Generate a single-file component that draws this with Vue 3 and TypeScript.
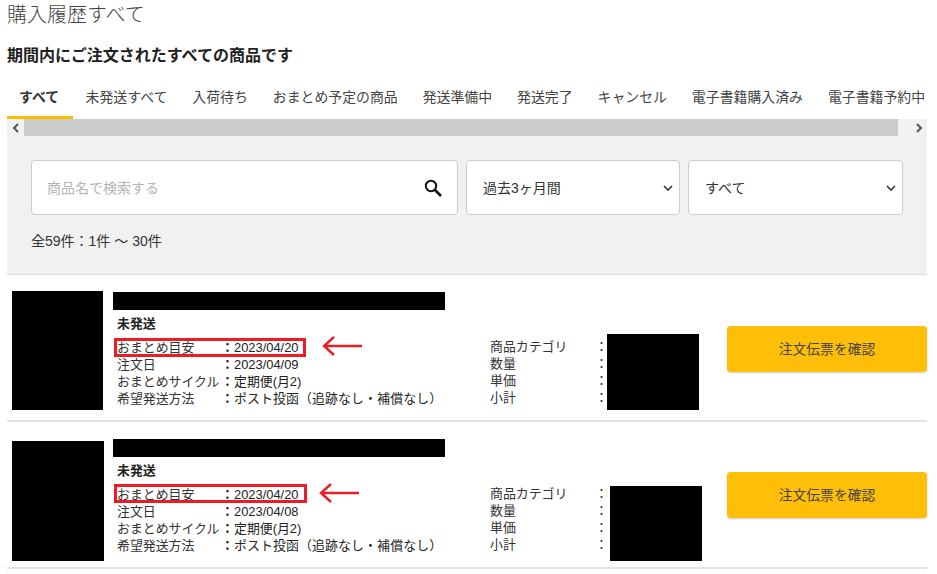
<script setup lang="ts">
interface Order {
  date: string
  thumbW: number
  thumbH: number
  thumbTop: number
  priceLeft: number
  priceTop: number
  priceH: number
  boxW: number
  boxTop: number
  arrowLeft: number
  btnTop: number
  tick: boolean
}

const tabs: string[] = ['すべて', '未発送すべて', '入荷待ち', 'おまとめ予定の商品', '発送準備中', '発送完了', 'キャンセル', '電子書籍購入済み', '電子書籍予約中']

const orders: Order[] = [
  { date: '2023/04/09', thumbW: 91, thumbH: 119, thumbTop: 16, priceLeft: 600, priceTop: 59, priceH: 76, boxW: 192, boxTop: 63, arrowLeft: 208, btnTop: 51, tick: false },
  { date: '2023/04/08', thumbW: 92, thumbH: 120, thumbTop: 19, priceLeft: 603, priceTop: 64, priceH: 75, boxW: 193, boxTop: 62, arrowLeft: 205, btnTop: 50, tick: true },
]
</script>

<template>
  <div class="page">
    <h1 class="title">購入履歴すべて</h1>
    <p class="lead">期間内にご注文されたすべての商品です</p>

    <nav class="tabs">
      <span v-for="(tab, i) in tabs" :key="tab" class="tab" :class="{ active: i === 0 }">{{ tab }}</span>
    </nav>

    <div class="scrollbar">
      <span class="scroll-btn">
        <svg width="8" height="10" viewBox="0 0 8 10"><path d="M6 1 2 5l4 4" fill="none" stroke="#555" stroke-width="2" /></svg>
      </span>
      <span class="scroll-thumb"></span>
      <span class="scroll-end">
        <svg width="8" height="10" viewBox="0 0 8 10"><path d="M2 1l4 4-4 4" fill="none" stroke="#555" stroke-width="2" /></svg>
      </span>
    </div>

    <section class="filters">
      <div class="controls">
        <div class="search">
          <span class="placeholder">商品名で検索する</span>
          <svg width="18" height="18" viewBox="0 0 18 18"><circle cx="7" cy="7" r="5.2" fill="none" stroke="#111" stroke-width="2" /><path d="M11 11l6 6" stroke="#111" stroke-width="2.6" /></svg>
        </div>
        <div class="select period">
          <span class="select-text">過去3ヶ月間</span>
          <svg width="10" height="6" viewBox="0 0 10 6"><path d="M1 1l4 4 4-4" fill="none" stroke="#333" stroke-width="1.6" /></svg>
        </div>
        <div class="select kind">
          <span class="select-text">すべて</span>
          <svg width="10" height="6" viewBox="0 0 10 6"><path d="M1 1l4 4 4-4" fill="none" stroke="#333" stroke-width="1.6" /></svg>
        </div>
      </div>
      <p class="count">全59件：1件 ～ 30件</p>
    </section>

    <article v-for="order in orders" :key="order.date" class="order">
      <div class="thumb-cell">
        <div class="thumb" :style="{ width: order.thumbW + 'px', height: order.thumbH + 'px', marginTop: order.thumbTop + 'px' }"></div>
      </div>
      <div class="main">
        <div class="redact-title"></div>
        <div class="status">未発送</div>
        <div class="rows">
          <div class="row">
            <span class="key">おまとめ目安</span><span class="colon">：</span><span class="val">2023/04/20</span>
          </div>
          <div class="row">
            <span class="key">注文日</span><span class="colon">：</span><span class="val">{{ order.date }}</span>
          </div>
          <div class="row">
            <span class="key">おまとめサイクル</span><span class="colon">：</span><span class="val">定期便(月2)</span>
          </div>
          <div class="row">
            <span class="key">希望発送方法</span><span class="colon">：</span><span class="val wide">ポスト投函（追跡なし・補償なし）</span>
          </div>
        </div>
        <div class="mark" :style="{ width: order.boxW + 'px', top: order.boxTop + 'px' }"></div>
        <svg class="arrow" :style="{ left: order.arrowLeft + 'px' }" width="42" height="22" viewBox="0 0 42 22">
          <path d="M41 11H3M13 2 3 11l10 9" fill="none" stroke="#ed1c24" stroke-width="2.4" />
        </svg>
      </div>
      <div class="meta">
        <div class="meta-row"><span class="meta-key">商品カテゴリ</span><span>：</span></div>
        <div class="meta-row"><span class="meta-key">数量</span><span>：</span></div>
        <div class="meta-row"><span class="meta-key">単価</span><span>：</span></div>
        <div class="meta-row"><span class="meta-key">小計</span><span>：</span></div>
      </div>
      <div class="redact-price" :style="{ left: order.priceLeft + 'px', top: order.priceTop + 'px', height: order.priceH + 'px' }"></div>
      <span v-if="order.tick" class="tick"></span>
      <button class="confirm" type="button" :style="{ top: order.btnTop + 'px' }">注文伝票を確認</button>
    </article>
  </div>
</template>

<style scoped>
.page {
  width: 920px;
  margin-left: 7px;
  font-family: "Liberation Sans", "Noto Sans CJK JP", sans-serif;
  color: #333;
}
.title {
  margin: 0;
  height: 43px;
  padding-top: 1px;
  font-size: 20px;
  line-height: 28px;
  font-weight: 300;
  color: #444;
}
.lead {
  margin: 0;
  height: 33px;
  padding-top: 1px;
  font-size: 16px;
  line-height: 22px;
  font-weight: 700;
  color: #222;
}
.tabs {
  display: flex;
  height: 41px;
  white-space: nowrap;
  overflow: hidden;
}
.tab {
  padding: 7px 12px 0;
  margin-right: 0.9px;
  font-size: 13.9px;
  line-height: 24px;
  color: #444;
}
.active {
  padding: 7px 13.5px 0 12px;
  height: 31px;
  font-weight: 700;
  color: #333;
  border-bottom: 3px solid #ffbe00;
}
.scrollbar {
  display: flex;
  height: 17px;
  background: #f1f1f1;
}
.scroll-btn,
.scroll-end {
  display: flex;
  align-items: center;
  justify-content: center;
}
.scroll-btn {
  width: 17px;
}
.scroll-thumb {
  width: 874px;
  background: #cbcbcb;
}
.scroll-end {
  flex: 1;
  justify-content: flex-end;
  padding-right: 4px;
}
.filters {
  height: 139px;
  padding: 24px 24px 0;
  box-sizing: border-box;
  background: #f1f1f1;
  border-bottom: 1px solid #ddd;
}
.controls {
  display: flex;
  gap: 8px;
}
.search,
.select {
  display: flex;
  align-items: center;
  justify-content: space-between;
  height: 55px;
  box-sizing: border-box;
  background: #fff;
  border: 1px solid #ccc;
  border-radius: 4px;
}
.search {
  width: 427px;
  padding: 0 15px;
}
.placeholder {
  padding-bottom: 2px;
  font-size: 14px;
  color: #b4b4b4;
}
.select {
  padding: 0 6px 0 16px;
  font-size: 14px;
  color: #333;
}
.select-text {
  padding-bottom: 2px;
}
.period {
  width: 214px;
}
.kind {
  width: 215px;
}
.count {
  margin: 15px 0 0;
  font-size: 14px;
  line-height: 22px;
  color: #333;
}
.order {
  position: relative;
  display: flex;
  align-items: flex-start;
  height: 147px;
  box-sizing: border-box;
  padding-left: 5px;
  border-bottom: 2px solid #e2e2e2;
}
.thumb-cell {
  width: 91px;
  flex: none;
}
.thumb {
  background: #000;
}
.main {
  position: relative;
  width: 377px;
  margin-left: 10px;
  flex: none;
}
.redact-title {
  width: 332px;
  height: 18px;
  margin-top: 17px;
  background: #000;
}
.status {
  margin: 5px 0 0 4px;
  font-size: 12.9px;
  line-height: 18px;
  font-weight: 700;
  color: #222;
}
.rows {
  margin: 6px 0 0 4px;
}
.row {
  display: flex;
  height: 17px;
  font-size: 12.9px;
  line-height: 17px;
  white-space: nowrap;
}
.key {
  width: 104px;
  flex: none;
}
.colon {
  width: 13px;
  flex: none;
  text-align: center;
  font-weight: 700;
  color: #222;
}
.val {
  color: #222;
}
.wide {
  letter-spacing: 0.12px;
  text-spacing-trim: space-all;
}
.mark {
  position: absolute;
  left: 1px;
  height: 19px;
  box-sizing: border-box;
  border: 3px solid #ed1c24;
}
.arrow {
  position: absolute;
  top: 60px;
}
.meta {
  width: 236px;
  padding-top: 63px;
  flex: none;
}
.meta-row {
  display: flex;
  height: 17px;
  font-size: 12.9px;
  line-height: 17px;
}
.meta-key {
  width: 105px;
}
.redact-price {
  position: absolute;
  width: 92px;
  background: #000;
}
.tick {
  position: absolute;
  left: 599px;
  top: 67px;
  width: 1px;
  height: 9px;
  background: #fff3b0;
}
.confirm {
  position: absolute;
  right: 0;
  width: 200px;
  height: 46px;
  padding: 0 0 3px;
  border: 0;
  border-radius: 4px;
  background: #ffbe07;
  box-shadow: 0 1px 2px rgba(0, 0, 0, 0.2);
  font-family: inherit;
  font-size: 13.8px;
  color: #444;
}
</style>
